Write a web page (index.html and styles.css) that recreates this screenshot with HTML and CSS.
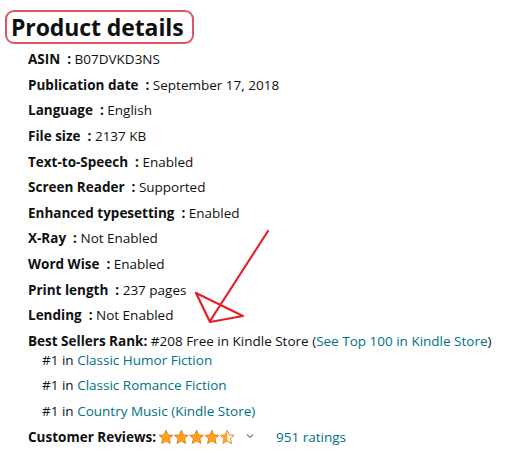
FILE: index.html
```html
<!DOCTYPE html>
<html>
<head>
<meta charset="utf-8">
<link rel="stylesheet" href="styles.css">
</head>
<body>
<div class="page">
  <h2 class="title">Product details</h2>
  <ul class="details">
    <li><span class="lbl">ASIN&nbsp; : </span><span>B07DVKD3NS</span></li>
    <li><span class="lbl">Publication date&nbsp; : </span><span>September 17, 2018</span></li>
    <li><span class="lbl">Language&nbsp; : </span><span>English</span></li>
    <li><span class="lbl">File size&nbsp; : </span><span>2137 KB</span></li>
    <li><span class="lbl">Text-to-Speech&nbsp; : </span><span>Enabled</span></li>
    <li><span class="lbl">Screen Reader&nbsp; : </span><span>Supported</span></li>
    <li><span class="lbl">Enhanced typesetting&nbsp; : </span><span>Enabled</span></li>
    <li><span class="lbl">X-Ray&nbsp; : </span><span>Not Enabled</span></li>
    <li><span class="lbl">Word Wise&nbsp; : </span><span>Enabled</span></li>
    <li><span class="lbl">Print length&nbsp; : </span><span>237 pages</span></li>
    <li><span class="lbl">Lending&nbsp; : </span><span>Not Enabled</span></li>
    <li>
      <div><span class="lbl">Best Sellers Rank:</span> #208 Free in Kindle Store (<a class="link" href="#">See Top 100 in Kindle Store</a>)</div>
      <ul class="ranks">
        <li>#1 in <a class="link" href="#">Classic Humor Fiction</a></li>
        <li>#1 in <a class="link" href="#">Classic Romance Fiction</a></li>
        <li>#1 in <a class="link" href="#">Country Music (Kindle Store)</a></li>
      </ul>
    </li>
    <li class="reviews">
      <span class="lbl">Customer Reviews:</span>
      <span class="stars">
        <svg width="78" height="16" viewBox="0 0 78 16">
          <defs>
            <path id="st" d="M7.5 0.8 L9.5 5.4 L14.4 5.8 L10.7 9.1 L11.8 14 L7.5 11.4 L3.2 14 L4.3 9.1 L0.6 5.8 L5.5 5.4 Z"/>
            <clipPath id="half"><rect x="0" y="0" width="7.5" height="16"/></clipPath>
          </defs>
          <use href="#st" x="0.5" y="0.5" fill="#FFA41C" stroke="#E47911" stroke-width="0.9"/>
          <use href="#st" x="15.8" y="0.5" fill="#FFA41C" stroke="#E47911" stroke-width="0.9"/>
          <use href="#st" x="31.1" y="0.5" fill="#FFA41C" stroke="#E47911" stroke-width="0.9"/>
          <use href="#st" x="46.4" y="0.5" fill="#FFA41C" stroke="#E47911" stroke-width="0.9"/>
          <g transform="translate(61.7 0.5)">
            <use href="#st" fill="#fff" stroke="#E47911" stroke-width="0.9"/>
            <use href="#st" fill="#FFA41C" clip-path="url(#half)"/>
          </g>
        </svg>
        <svg class="chev" width="8" height="6" viewBox="0 0 8 6"><path d="M1 1.5 L4 4.5 L7 1.5" fill="none" stroke="#7a7f80" stroke-width="1.1"/></svg>
      </span>
      <a class="link ratings" href="#">951 ratings</a>
    </li>
  </ul>
  <svg class="arrow" width="511" height="463" viewBox="0 0 511 463">
    <g fill="none" stroke="#E3202A" stroke-width="2.2" stroke-linecap="round" stroke-linejoin="round">
      <path d="M268 231 L210 321"/>
      <path d="M196 293 L210 322 L243 316 Z"/>
    </g>
  </svg>
</div>
</body>
</html>
```

FILE: styles.css
```css
html, body {
  margin: 0;
  padding: 0;
  background: #ffffff;
}
.page {
  position: relative;
  width: 511px;
  height: 463px;
  overflow: hidden;
  font-family: "Open Sans", "Noto Sans", sans-serif;
  font-size: 13.5px;
  color: #0F1111;
  padding: 10px 0 0 5px;
  box-sizing: border-box;
}
.title {
  display: inline-block;
  margin: 0;
  font-size: 23px;
  font-weight: 700;
  line-height: 29px;
  padding: 1px 8px 0 4px;
  border: 2.5px solid #DD5560;
  border-radius: 9px;
  color: #0F1111;
  letter-spacing: -0.1px;
}
.details {
  list-style: none;
  margin: 5px 0 0 23px;
  padding: 0;
  display: flex;
  flex-direction: column;
  gap: 5.64px;
}
.details > li {
  line-height: 20px;
}
.lbl {
  font-weight: 700;
}
.link {
  color: #007185;
  text-decoration: none;
}
.ranks {
  list-style: none;
  margin: -1px 0 0 14px;
  padding: 0;
  display: flex;
  flex-direction: column;
  gap: 5.5px;
}
.ranks li {
  line-height: 20px;
}
.reviews {
  display: flex;
  align-items: center;
  margin-top: 0.5px;
}
.stars {
  display: inline-flex;
  align-items: center;
  margin-left: 2px;
}
.stars svg {
  display: block;
}
.chev {
  margin-left: 10px;
  margin-top: -2px;
}
.ratings {
  margin-left: 22px;
}
.arrow {
  position: absolute;
  left: 0;
  top: 0;
  pointer-events: none;
}
```
